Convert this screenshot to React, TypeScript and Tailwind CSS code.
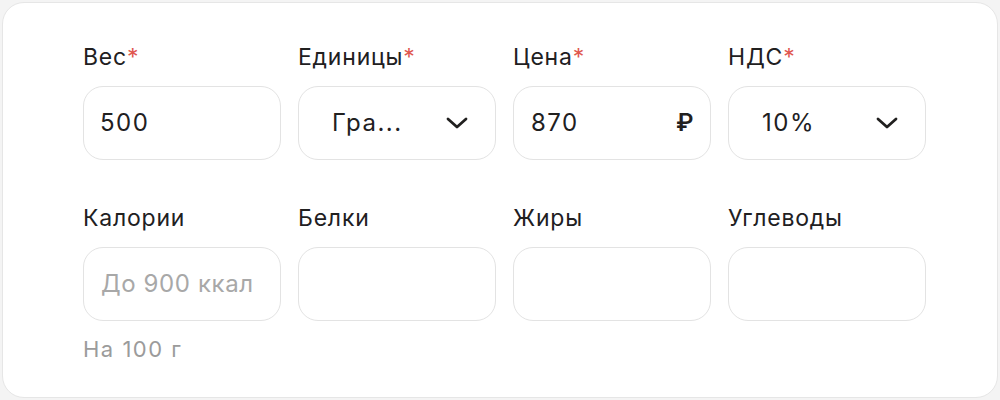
function Chevron() {
  return (
    <svg width="22" height="12" viewBox="0 0 22 12" fill="none" className="text-[#21201f]">
      <path d="M2 2L11 10L20 2" stroke="currentColor" strokeWidth="2.8" strokeLinecap="round" strokeLinejoin="round" />
    </svg>
  );
}

function Label({ text, required }: { text: string; required?: boolean }) {
  return (
    <p className="h-[26px] text-[23px] leading-[26px] tracking-[0.8px] text-[#21201f] mb-[16px]">
      {text}
      {required && <span className="text-[#e0574f]">*</span>}
    </p>
  );
}

function Box({ children, className = "" }: { children?: React.ReactNode; className?: string }) {
  return (
    <div
      className={`h-[74px] rounded-[20px] border border-[#e3e3e3] bg-white flex items-center whitespace-nowrap ${className}`}
    >
      {children}
    </div>
  );
}

const value = "text-[24px] tracking-[1.5px] text-[#21201f]";

export default function App() {
  return (
    <div className="w-[1000px] h-[400px] bg-[#f4f4f4] p-[2px]" style={{ fontFamily: "Inter, 'Noto Sans', sans-serif" }}>
      <div className="h-[396px] w-[996px] rounded-[22px] border border-[#e6e6e6] bg-white pl-[80px] pt-[41px]">
        <div className="grid grid-cols-[198px_198px_198px_198px] gap-x-[17px]">
          <div>
            <Label text="Вес" required />
            <Box className={`px-[16px] ${value}`}>500</Box>
          </div>
          <div>
            <Label text="Единицы" required />
            <Box className={`pl-[33px] pr-[27px] justify-between ${value}`}>
              <span>Гра...</span>
              <Chevron />
            </Box>
          </div>
          <div>
            <Label text="Цена" required />
            <Box className={`pl-[17px] pr-[15px] justify-between ${value}`}>
              <span>870</span>
              <span className="font-semibold">₽</span>
            </Box>
          </div>
          <div>
            <Label text="НДС" required />
            <Box className={`pl-[33px] pr-[27px] justify-between ${value}`}>
              <span>10%</span>
              <Chevron />
            </Box>
          </div>
        </div>
        <div className="grid grid-cols-[198px_198px_198px_198px] gap-x-[17px] mt-[45px]">
          <div>
            <Label text="Калории" />
            <Box className="px-[17px] text-[24px] tracking-[0.6px] text-[#a8a8a8]">До 900 ккал</Box>
            <p className="mt-[15px] text-[22px] leading-[26px] tracking-[1.5px] text-[#9b9b9b]">На 100 г</p>
          </div>
          <div>
            <Label text="Белки" />
            <Box />
          </div>
          <div>
            <Label text="Жиры" />
            <Box />
          </div>
          <div>
            <Label text="Углеводы" />
            <Box />
          </div>
        </div>
      </div>
    </div>
  );
}
